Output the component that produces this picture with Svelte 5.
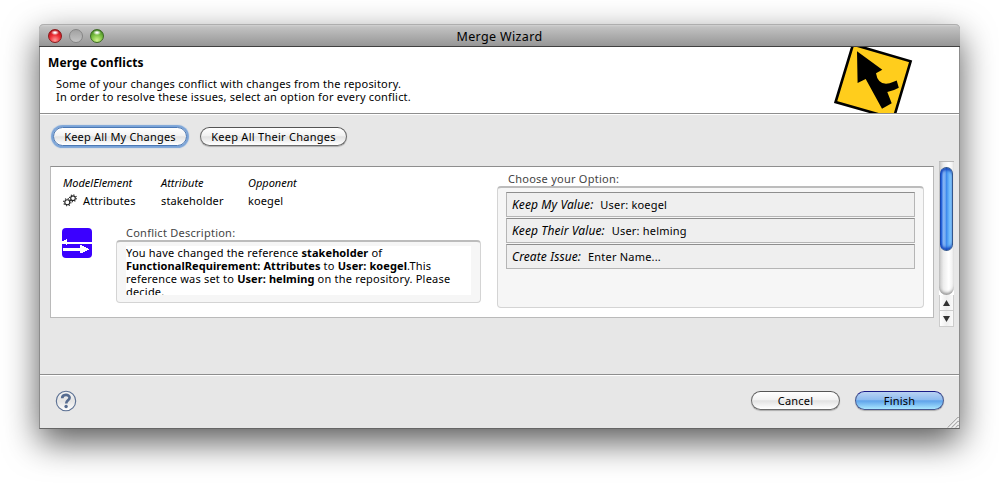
<script>
  const options = [
    { title: 'Keep My Value:', value: 'User: koegel' },
    { title: 'Keep Their Value:', value: 'User: helming' },
    { title: 'Create Issue:', value: 'Enter Name...' }
  ];
</script>

<div class="desktop">
  <main class="window">
    <header class="titlebar">
      <div class="lights">
        <i class="light red"></i><i class="light gray"></i><i class="light green"></i>
      </div>
      <span class="title">Merge Wizard</span>
    </header>

    <section class="banner">
      <div class="intro">
        <h1>Merge Conflicts</h1>
        <p>Some of your changes conflict with changes from the repository.<br /><span class="second">In order to resolve these issues, select an option for every conflict.</span></p>
      </div>
      <svg class="sign" width="84" height="66" viewBox="832 47 84 66">
        <path d="M835.6 102 L853 44.5 L910.6 61.3 L893.6 118.6 Z" fill="#ffcd1c" stroke="#000" stroke-width="2.6" />
        <path d="M857 51.3 L882.3 69.8 L876 73.3 Q877.5 83.5 886 83.7 Q890 83.4 892.3 82.3 L896.7 80.4 L898.8 87.7 Q893 91 887.3 92 L891.7 103.2 L882 108.7 L865.7 79 L857.6 83 Z" />
      </svg>
    </section>

    <section class="content">
      <div class="actions">
        <button class="pill focused">Keep All My Changes</button>
        <button class="pill wide">Keep All Their Changes</button>
      </div>

      <div class="scroller">
        <article class="conflict">
          <div class="details">
            <div class="facts">
              <div class="fact f1">
                <em>ModelElement</em>
                <span class="val">
                  <svg width="14" height="13" viewBox="0 0 14 13" fill="none" stroke="#222">
                    <circle cx="4.3" cy="8.2" r="2.5" stroke-width="1.1" />
                    <circle cx="4.3" cy="8.2" r="3.6" stroke-width="1.1" stroke-dasharray="1.2 1.63" />
                    <circle cx="10" cy="4.2" r="2.3" stroke-width="1.1" />
                    <circle cx="10" cy="4.2" r="3.4" stroke-width="1.1" stroke-dasharray="1.1 1.57" />
                  </svg>
                  Attributes
                </span>
              </div>
              <div class="fact f2"><em>Attribute</em><span class="val">stakeholder</span></div>
              <div class="fact f3"><em>Opponent</em><span class="val">koegel</span></div>
            </div>
            <div class="why">
              <svg class="swap" width="30" height="30" viewBox="0 0 30 30">
                <rect width="30" height="30" rx="4" fill="#3b00ff" />
                <path shape-rendering="crispEdges" fill="#fff" d="M0 13H2V12H4V11H5V14H30V16H5V17H4V16H0Z M1 20H18V17H20V18H22V19H24V20H26V21H27V22H25V23H23V24H21V25H18V23H1Z" />
              </svg>
              <div class="group desc">
                <span class="label">Conflict Description:</span>
                <div class="frame">
                  <div class="text">
                    <div>You have changed the reference <b>stakeholder</b> of</div>
                    <div><b>FunctionalRequirement: Attributes</b> to <b>User: koegel</b>.This</div>
                    <div>reference was set to <b>User: helming</b> on the repository. Please</div>
                    <div>decide.</div>
                  </div>
                </div>
              </div>
            </div>
          </div>
          <div class="group choose">
            <span class="label">Choose your Option:</span>
            <div class="frame">
              {#each options as o}
                <div class="option"><em>{o.title}</em><span>{o.value}</span></div>
              {/each}
            </div>
          </div>
        </article>

        <div class="scrollbar">
          <div class="track"><div class="thumb"></div></div>
          <div class="arrow"><svg width="7" height="6"><path d="M3.5 0 L7 6 H0Z" fill="#333" /></svg></div>
          <div class="arrow"><svg width="7" height="6"><path d="M3.5 6 L7 0 H0Z" fill="#333" /></svg></div>
        </div>
      </div>
    </section>

    <footer>
      <svg class="help" width="22" height="22" viewBox="0 0 22 22">
        <defs><linearGradient id="hg" x1="0" y1="0" x2="0" y2="1"><stop offset="0" stop-color="#f6f6f6" /><stop offset=".5" stop-color="#e4e4e4" /><stop offset="1" stop-color="#fff" /></linearGradient></defs>
        <circle cx="11" cy="11" r="9.7" fill="url(#hg)" stroke="#5b7093" stroke-width="1.1" />
        <path d="M7.2 8.3 C7.2 3.8 14.6 3.8 14.6 7.7 C14.6 10.3 11.2 10.3 11.2 13.4" fill="none" stroke="#566c90" stroke-width="2.7" />
        <circle cx="11.1" cy="16.5" r="1.7" fill="#566c90" />
      </svg>
      <div class="buttons">
        <button class="pill small">Cancel</button>
        <button class="pill small primary">Finish</button>
      </div>
      <svg class="grip" width="12" height="12" viewBox="0 0 12 12" stroke-width="1">
        <path d="M1 11.5 L11.5 1 M5 11.5 L11.5 5 M9 11.5 L11.5 9" stroke="#777" />
        <path d="M2 11.5 L11.5 2 M6 11.5 L11.5 6 M10 11.5 L11.5 10" stroke="#fff" />
      </svg>
    </footer>
  </main>
</div>

<style>
  .desktop {
    box-sizing: border-box;
    width: 999px;
    height: 483px;
    padding: 24px 39px 0;
    overflow: hidden;
    background: #fff;
    font: 11px/13px 'Noto Sans', 'Open Sans', sans-serif;
    letter-spacing: 0.2px;
    color: #000;
  }
  .window {
    box-sizing: border-box;
    display: flex;
    flex-direction: column;
    width: 921px;
    height: 405px;
    border: 1px solid #8c8c8c;
    border-top: 0;
    border-bottom-color: #666;
    border-radius: 5px 5px 0 0;
    background: #e7e7e7;
    box-shadow: 0 13px 34px rgba(0, 0, 0, 0.65);
  }
  .titlebar {
    box-sizing: border-box;
    display: grid;
    grid-template-columns: 1fr auto 1fr;
    align-items: center;
    height: 23px;
    margin: 0 -1px;
    padding: 0 9px;
    border-top: 1px solid #aeaeae;
    border-bottom: 1px solid #404040;
    border-radius: 5px 5px 0 0;
    background: linear-gradient(#d2d2d2, #c2c2c2 2px, #969696);
  }
  .lights { display: flex; gap: 7px; padding-top: 1px; }
  .light {
    box-sizing: border-box;
    width: 14px;
    height: 14px;
    border-radius: 50%;
    border: 1px solid #555;
  }
  .red { border-color: #8a1a1c; background: radial-gradient(ellipse 4px 2.5px at 50% 22%, #fff 20%, transparent), radial-gradient(circle at 50% 85%, #ff9a98, #ee2f36 45%, #b51018 85%); }
  .gray { border-color: #858585; background: linear-gradient(#a2a2a2, #c4c4c4); }
  .green { border-color: #3c6a22; background: radial-gradient(ellipse 4px 2.5px at 50% 22%, #fff 20%, transparent), radial-gradient(circle at 50% 85%, #d0f58c, #77bd3f 50%, #3c7d1c 90%); }
  .title { font-size: 12.5px; letter-spacing: 0.35px; padding-top: 1px; }

  .banner {
    box-sizing: border-box;
    display: flex;
    justify-content: space-between;
    height: 67px;
    padding: 0 43px 0 8px;
    border-bottom: 1px solid #8e8e8e;
    background: #fff;
  }
  .intro { padding-top: 9px; }
  h1 { margin: 0; font-size: 12px; line-height: 14px; font-weight: 700; letter-spacing: 0.13px; }
  p { margin: 7px 0 0 8px; white-space: nowrap; }

  .content {
    box-sizing: border-box;
    height: 260px;
    padding: 13px 5px 0 10px;
    border-top: 1px solid #fff;
  }
  .actions { display: flex; gap: 13px; margin-top: -1px; padding-left: 3px; }
  .pill {
    box-sizing: border-box;
    width: 134px;
    height: 19px;
    padding: 0 0 1px;
    border: 1px solid #6a6a6a;
    border-top-color: #555;
    border-radius: 10px;
    background: linear-gradient(#fff, #f2f2f2 45%, #e2e2e2 52%, #fff);
    box-shadow: 0 1px 1px rgba(0, 0, 0, 0.25);
    font: inherit;
    letter-spacing: 0.2px;
    color: #000;
    white-space: nowrap;
  }
  .wide { width: 147px; letter-spacing: 0.27px; }
  .focused { border-color: #4b78b4; box-shadow: 0 0 1px 2px #79a3d8; }
  .small { width: 89px; }
  .primary {
    border-color: #45578e;
    border-top-color: #1a1c88;
    background: linear-gradient(#b9d2f3, #8fbcf0 45%, #5fa3ea 52%, #a8e6ff);
  }

  .scroller { display: flex; justify-content: space-between; margin-top: 15px; }
  .conflict {
    box-sizing: border-box;
    display: flex;
    justify-content: space-between;
    width: 884px;
    height: 152px;
    margin-top: 5px;
    padding: 5px 9px 0 11px;
    border: 1px solid #bababa;
    border-top-color: #8e8e8e;
    background: #fff;
  }
  .facts { display: flex; padding: 4px 0 0 1px; }
  .fact { display: flex; flex-direction: column; gap: 5px; }
  .fact em { letter-spacing: 0; }
  .f1 { width: 98px; }
  .f2 { width: 87px; }
  .val { display: flex; gap: 6px; letter-spacing: 0.12px; }
  .why { display: flex; justify-content: space-between; width: 419px; margin-top: 19px; }
  .swap { margin-top: 2px; }
  .label { display: block; color: #444; white-space: nowrap; letter-spacing: 0.25px; }
  .group .frame {
    box-sizing: border-box;
    border: 1px solid #d4d4d4;
    border-top: 2px solid #bcbcbc;
    border-radius: 4px;
    background: #f6f6f6;
  }
  .desc .label, .choose .label { padding-left: 10px; }
  .choose .label { padding-left: 11px; }
  .desc .frame { width: 365px; height: 63px; margin-top: 1px; padding: 4px 9px 0; }
  .text { width: 345px; height: 49px; overflow: hidden; background: #fff; white-space: nowrap; }
  .text b { letter-spacing: 0.08px; }
  .choose .frame { width: 427px; height: 122px; margin-top: 1px; padding: 4px 8px; display: flex; flex-direction: column; gap: 1px; }
  .option {
    box-sizing: border-box;
    height: 25px;
    padding: 5px;
    border: 1px solid #b5b5b5;
    border-top-color: #8e8e8e;
    background: #efefef;
    white-space: nowrap;
  }
  .option em { margin-right: 7px; font-size: 12px; line-height: 12px; letter-spacing: 0.1px; }

  .scrollbar { width: 15px; height: 166px; display: flex; flex-direction: column; background: #fff; }
  .track {
    box-sizing: border-box;
    height: 134px;
    padding: 5px 1px 0;
    border-top: 1px solid #b8b8b8;
    border-radius: 0 0 8px 8px;
    background: linear-gradient(90deg, #c4c4c4, #ededed 30%, #fff 65%, #ececec);
    box-shadow: inset 0 -3px 3px -1px #999;
  }
  .thumb {
    box-sizing: border-box;
    width: 13px;
    height: 84px;
    border: 1px solid #33568c;
    border-left-color: #1748b4;
    border-radius: 7px;
    background: linear-gradient(90deg, #1d5fe0, #83b4f4 20%, #78adf2 38%, #3b88ec 48%, #6cb8fb 75%, #9adcff);
    box-shadow: inset 0 3px 3px -1px #1545bb, inset 0 -3px 3px -1px #1545bb;
  }
  .arrow {
    box-sizing: border-box;
    display: grid;
    place-items: center;
    height: 16px;
    border: 1px solid #ccc;
    border-width: 0 1px 1px;
    background: linear-gradient(90deg, #fff, #eee 50%, #fafafa);
  }

  footer {
    position: relative;
    box-sizing: border-box;
    display: flex;
    justify-content: space-between;
    align-items: flex-start;
    height: 54px;
    padding: 16px 15px 0 15px;
    border-top: 1px solid #8e8e8e;
    box-shadow: inset 0 1px #fff;
  }
  .help { margin-top: -1px; }
  .buttons { display: flex; gap: 15px; }
  .grip { position: absolute; right: 0; bottom: 0; }
</style>
